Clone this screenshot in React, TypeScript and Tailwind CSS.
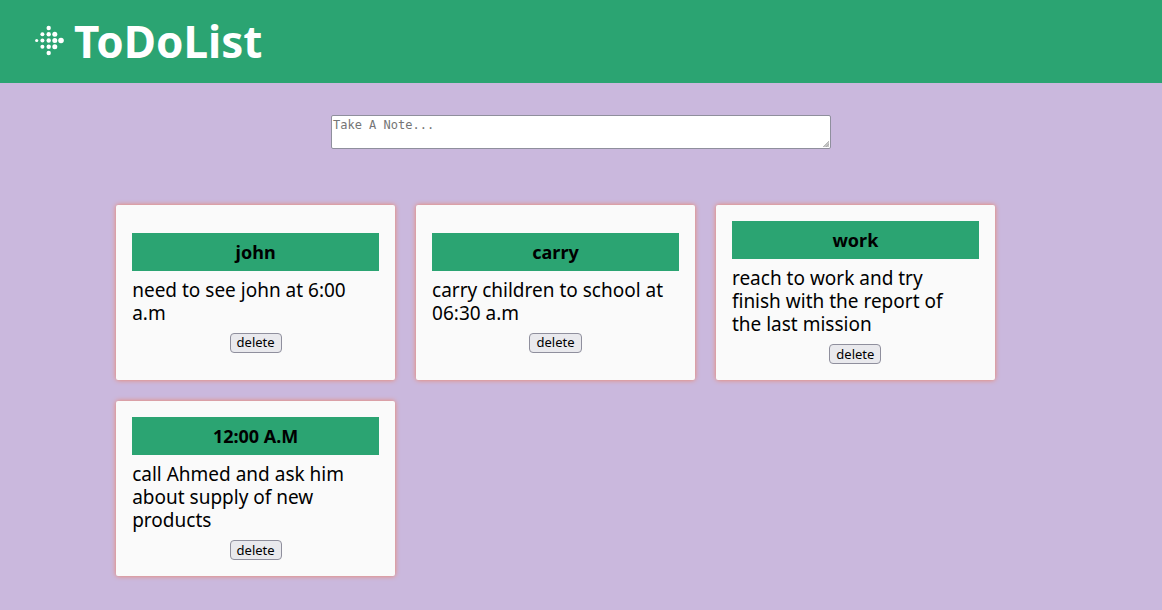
import { useState } from "react";

type Note = { id: number; title: string; content: string };

const initialNotes: Note[] = [
  { id: 1, title: "john", content: "need to see john at 6:00 a.m" },
  { id: 2, title: "carry", content: "carry children to school at 06:30 a.m" },
  { id: 3, title: "work", content: "reach to work and try finish with the report of the last mission" },
  { id: 4, title: "12:00 A.M", content: "call Ahmed and ask him about supply of new products" },
];

// Diamond of dots that grow from left to right: [cx, cy, r]
const dots: [number, number, number][] = [
  [4.7, 15.5, 1.6],
  [10.4, 9.3, 2],
  [10.4, 15.5, 2],
  [10.4, 21.7, 2],
  [16.7, 3, 2.2],
  [16.7, 9.3, 2.2],
  [16.7, 15.5, 2.2],
  [16.7, 21.7, 2.2],
  [16.7, 28, 2.2],
  [22.8, 9.3, 2.5],
  [22.8, 15.5, 2.5],
  [22.8, 21.7, 2.5],
  [29, 15.5, 2.8],
];

function Logo() {
  return (
    <svg viewBox="0 0 34 34" className="h-[34px] w-[34px] fill-white" aria-hidden="true">
      {dots.map(([cx, cy, r]) => (
        <circle key={`${cx}-${cy}`} cx={cx} cy={cy} r={r} />
      ))}
    </svg>
  );
}

function NoteCard({ note, onDelete }: { note: Note; onDelete: () => void }) {
  return (
    <article className="flex w-[30%] flex-col justify-center gap-2 rounded-[2px] bg-[#fafafa] p-4 shadow-[0_0_5px_#f08060]">
      <h2 className="bg-[#2ba472] p-2 text-center text-[18px] leading-[22px] font-bold">{note.title}</h2>
      <p className="pr-2 text-[19px] leading-[23px]">{note.content}</p>
      <button
        type="button"
        onClick={onDelete}
        className="h-5 cursor-pointer self-center rounded-[4px] border border-[#8f8f9d] bg-[#e9e9ed] px-1.5 text-[13px] leading-[17px]"
      >
        delete
      </button>
    </article>
  );
}

export default function App() {
  const [notes, setNotes] = useState(initialNotes);

  return (
    <div className="min-h-screen bg-[#cab8dd] pb-8 font-['Noto_Sans',sans-serif] text-black">
      <header className="flex h-[83px] items-center gap-2 bg-[#2ba472] px-8 text-white">
        <Logo />
        <h1 className="text-[44px] leading-[51px] font-bold">ToDoList</h1>
      </header>
      <main>
        <form className="flex justify-center px-4 pt-8">
          <div className="relative w-[500px]">
            <textarea
              aria-label="Take A Note"
              placeholder="Take A Note..."
              rows={2}
              className="block h-[34px] w-full resize-none rounded-[2px] border border-[#8f8f9d] bg-white px-px py-0.5 font-['DejaVu_Sans_Mono',monospace] text-[12px] leading-[15px] placeholder:text-[#757575]"
            />
            <svg
              viewBox="0 0 6 6"
              className="pointer-events-none absolute right-0.5 bottom-0.5 h-1.5 w-1.5"
              aria-hidden="true"
            >
              <path d="M6 0V6H0Z" fill="#c4c4c4" />
              <path d="M0 6L6 0M3 6L6 3" stroke="#a8a8a8" strokeWidth="0.7" />
            </svg>
          </div>
        </form>
        <section className="mx-[10%] mt-14 flex flex-wrap gap-[21px]">
          {notes.map((note) => (
            <NoteCard
              key={note.id}
              note={note}
              onDelete={() => setNotes(notes.filter((n) => n.id !== note.id))}
            />
          ))}
        </section>
      </main>
    </div>
  );
}
